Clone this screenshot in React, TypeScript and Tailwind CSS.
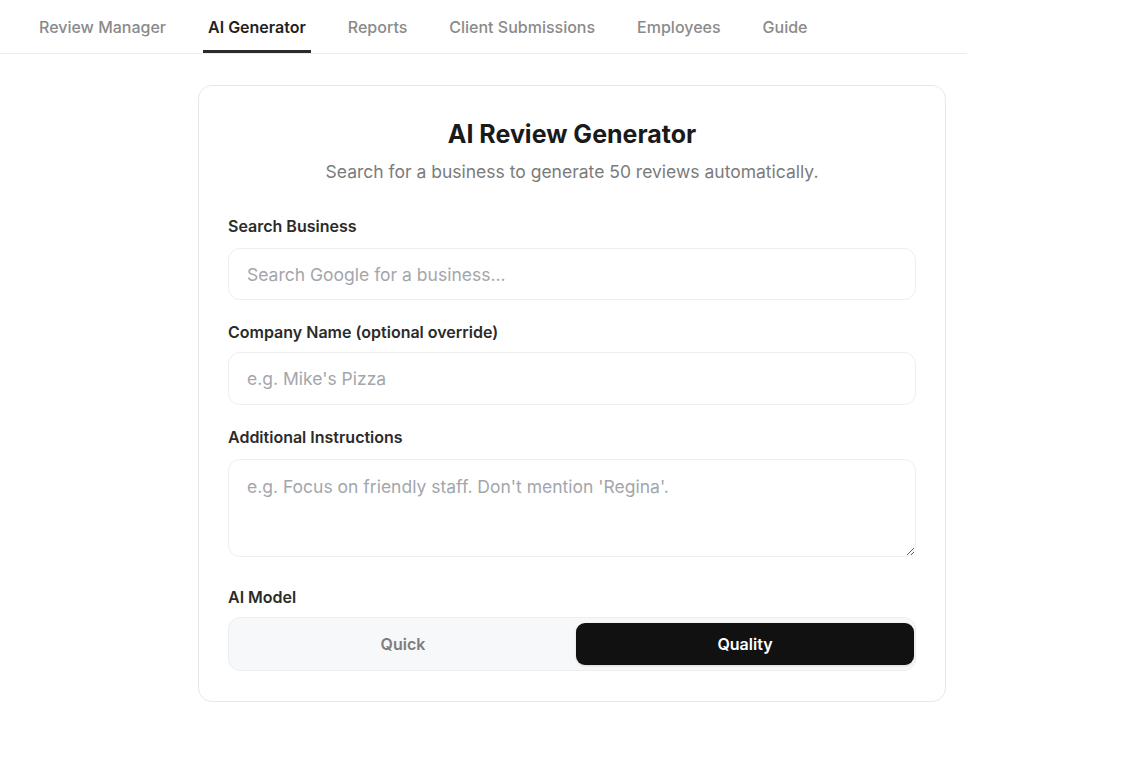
import React from "react";

const tabs = ["Review Manager", "AI Generator", "Reports", "Client Submissions", "Employees", "Guide"];

function Field({ label, children, className = "" }: { label: string; children: React.ReactNode; className?: string }) {
  return (
    <div className={className}>
      <label className="block text-[16px] leading-[20px] font-semibold text-[#2b2b2b]">{label}</label>
      {children}
    </div>
  );
}

export default function App() {
  const [model, setModel] = React.useState<"quick" | "quality">("quality");

  return (
    <div className="min-h-[760px] bg-white font-['Inter',sans-serif] text-[#1f1f1f]">
      {/* top tabs */}
      <nav className="w-[967px] h-[54px] border-b border-[#ececec] flex items-stretch gap-[32px] pl-[34px]">
        {tabs.map((t) => (
          <button
            key={t}
            className={
              t === "AI Generator"
                ? "px-[5px] text-[16px] font-semibold text-[#222] border-b-[3px] border-[#2a2a2a] pt-[3px]"
                : "px-[5px] text-[16px] font-medium text-[#8a8a8a] border-b-[3px] border-transparent pt-[3px]"
            }
          >
            {t}
          </button>
        ))}
      </nav>

      <div className="ml-[198px] mt-[31px] w-[748px] rounded-[14px] border border-[#e8e8e8] px-[29px] pt-[32px] pb-[30px]">
        <h1 className="text-center text-[25px] leading-[32px] font-bold text-[#1a1a1a]">AI Review Generator</h1>
        <p className="mt-[10px] text-center text-[17.5px] leading-[24px] text-[#7b7b7b]">
          Search for a business to generate 50 reviews automatically.
        </p>

        <Field label="Search Business" className="mt-[32px]">
          <input
            placeholder="Search Google for a business..."
            className="mt-[12px] w-full h-[52px] rounded-[12px] border border-[#eceef0] px-[18px] text-[17.5px] outline-none placeholder:text-[#a3a6ab]"
          />
        </Field>

        <Field label="Company Name (optional override)" className="mt-[22px]">
          <input
            placeholder="e.g. Mike's Pizza"
            className="mt-[10px] w-full h-[53px] rounded-[12px] border border-[#eceef0] px-[18px] text-[17.5px] outline-none placeholder:text-[#a3a6ab]"
          />
        </Field>

        <Field label="Additional Instructions" className="mt-[22px]">
          <textarea
            placeholder="e.g. Focus on friendly staff. Don't mention 'Regina'."
            className="mt-[12px] block w-full h-[98px] rounded-[12px] border border-[#eceef0] px-[18px] py-[15px] text-[17.5px] leading-[24px] outline-none resize-y placeholder:text-[#a3a6ab]"
          />
        </Field>

        <Field label="AI Model" className="mt-[30px]">
          <div className="mt-[10px] grid grid-cols-2 gap-[4px] py-[5px] pl-[5px] pr-[1px] h-[54px] rounded-[12px] border border-[#eceef0] bg-[#f6f8fa]">
            <button
              onClick={() => setModel("quick")}
              className={
                model === "quick"
                  ? "rounded-[9px] bg-[#111] text-white text-[16px] font-semibold"
                  : "rounded-[9px] text-[#7d7d7d] text-[16px] font-semibold"
              }
            >
              Quick
            </button>
            <button
              onClick={() => setModel("quality")}
              className={
                model === "quality"
                  ? "rounded-[9px] bg-[#111] text-white text-[16px] font-semibold shadow-sm"
                  : "rounded-[9px] text-[#7d7d7d] text-[16px] font-semibold"
              }
            >
              Quality
            </button>
          </div>
        </Field>
      </div>
    </div>
  );
}
